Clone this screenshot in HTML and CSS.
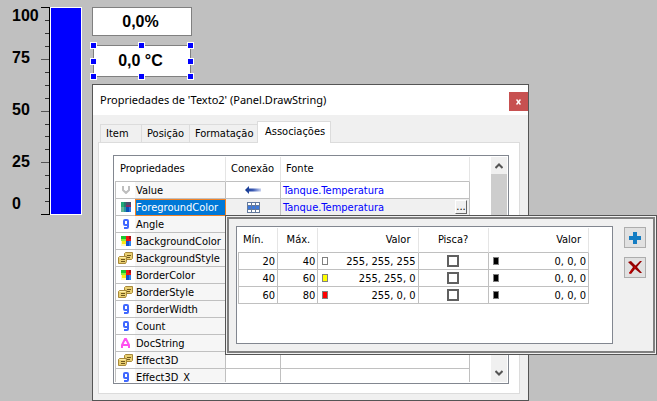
FILE: index.html
```html
<!DOCTYPE html>
<html lang="pt">
<head>
<meta charset="utf-8">
<title>Propriedades</title>
<link rel="stylesheet" href="styles.css">
</head>
<body>
<svg class="defs" aria-hidden="true">
  <symbol id="colors" viewBox="0 0 10 10">
    <path fill="#19c82d" d="M0 0h5v5H0z"/><path fill="#f01414" d="M5 0h5v5H5z"/><path fill="#ffe614" d="M0 5h5v5H0z"/><path fill="#1450d2" d="M5 5h5v5H5z"/>
    <path fill="#8cf03c" d="M0 3h5v2H0z"/><path fill="#fff" opacity=".7" d="M0 8h5v2H0zM0 5h1v5H0z"/><path fill="#a01414" d="M8 0h2v3H8z"/><path fill="#2882f0" d="M8 5h2v5H8z"/>
  </symbol>
  <symbol id="mixed" viewBox="0 0 10 10">
    <path fill="#1eaa78" d="M0 0h5v5H0z"/><path fill="#28786e" d="M3 0h2v5H3z"/><path fill="#46506e" d="M5 0h5v3H5z"/><path fill="#8c2864" d="M5 3h5v2H5z"/><path fill="#64b496" d="M0 5h5v5H0z"/><path fill="#2896a0" d="M3 5h2v5H3z"/><path fill="#0a50b4" d="M5 5h5v5H5z"/><path fill="#2878e6" d="M8 5h2v5H8z"/>
  </symbol>
  <symbol id="nine" viewBox="0 0 8 10">
    <path fill="none" stroke="#4169ff" stroke-width="2" d="M6 6H3Q2 6 2 5V2Q2 1 3 1H5Q6 1 6 2V8Q6 9 5 9H2"/>
  </symbol>
  <symbol id="tags" viewBox="0 0 15 12">
    <path fill="#e8ce70" stroke="#a8893a" d="M6.500 1.500l1-1h7v6l-1 1h-7z"/><path fill="none" stroke="#70581c" d="M9 3.500h4M9 5.500h3"/>
    <path fill="#e8ce70" stroke="#a8893a" d="M.5 5.500l1-1h7v5l-1 2h-7z"/><path fill="none" stroke="#fff0a8" d="M1.500 5.500h6"/><path fill="none" stroke="#70581c" d="M3 7.500h4M3 9.500h4"/>
  </symbol>
  <symbol id="letter" viewBox="0 0 9 10">
    <path fill="none" stroke="#ff50f0" stroke-width="2" d="M1 10V7L4 1H5L8 7V10M2 7H7"/>
  </symbol>
  <symbol id="vee" viewBox="0 0 8 8">
    <path fill="none" stroke="#bebebe" stroke-width="2" d="M1 0V4L4 7L7 4V0"/>
  </symbol>
</svg>
<main class="panel">
  <section class="drawing">
    <div class="gauge">
      <div class="scale"><span>100</span><span>75</span><span>50</span><span>25</span><span>0</span></div>
      <svg class="ticks" width="9" height="208" viewBox="0 0 9 208" shape-rendering="crispEdges">
        <path stroke="#000" d="M8.500 0V208M0 .5H9M0 207.500H9"/>
        <path stroke="#555" stroke-width="1" d="M0 52.500H8M0 104.500H8M0 155.500H8"/>
        <path stroke="#333" d="M4 13.500H8M4 26.500H8M4 39.500H8M4 65.500H8M4 78.500H8M4 91.500H8M4 117.500H8M4 129.500H8M4 142.500H8M4 168.500H8M4 181.500H8M4 194.500H8"/>
      </svg>
      <div class="bar"></div>
    </div>
    <div class="readouts">
      <div class="readout">0,0%</div>
      <div class="readout selected">0,0 °C
        <i class="handle top left"></i><i class="handle top center"></i><i class="handle top right"></i>
        <i class="handle middle left"></i><i class="handle middle right"></i>
        <i class="handle bottom left"></i><i class="handle bottom center"></i><i class="handle bottom right"></i>
      </div>
    </div>
  </section>

  <section class="dialog">
    <header class="titlebar">
      <h1>Propriedades de 'Texto2' (Panel.DrawString)</h1>
      <button class="close" aria-label="Fechar"><svg width="5" height="6" viewBox="0 0 5 6"><path fill="none" stroke="#fff" stroke-width="1.500" d="M.5 .5L4.500 5.500M4.500 .5L.5 5.500"/></svg></button>
    </header>
    <div class="content">
      <nav class="tabs" role="tablist">
        <button class="tab item" role="tab">Item</button>
        <button class="tab position" role="tab">Posição</button>
        <button class="tab format" role="tab">Formatação</button>
        <button class="tab active" role="tab">Associações</button>
      </nav>
      <div class="pane">
        <div class="list">
          <div class="viewport">
            <table class="grid props">
              <colgroup><col class="c-icon"><col class="c-name"><col class="c-link"><col></colgroup>
              <thead><tr><th colspan="2">Propriedades</th><th>Conexão</th><th>Fonte</th></tr></thead>
              <tbody>
                <tr><td><svg width="8" height="8"><use href="#vee"/></svg></td><td>Value</td><td><svg width="16" height="8" viewBox="0 0 16 8"><defs><linearGradient id="fade"><stop offset="0" stop-color="#0a328c"/><stop offset=".5" stop-color="#3c5ab4"/><stop offset="1" stop-color="#c8d2f0"/></linearGradient></defs><path fill="url(#fade)" d="M0 4L4 0V2.500H16V5.500H4V8Z"/></svg></td><td>Tanque.Temperatura</td></tr>
                <tr class="current"><td><svg width="10" height="10"><use href="#mixed"/></svg></td><td>ForegroundColor</td><td><svg width="13" height="11" viewBox="0 0 13 11" shape-rendering="crispEdges"><path fill="#63799c" d="M0 0h13v11H0z"/><path fill="#fff" d="M1 1h3v2H1zM5 1h3v2H5zM9 1h3v2H9zM1 8h3v2H1zM5 8h3v2H5zM9 8h3v2H9z"/><path fill="#3c78dc" d="M1 4h3v3H1zM5 4h3v3H5zM9 4h3v3H9z"/></svg></td><td><div class="source"><span>Tanque.Temperatura</span><button class="browse">...</button></div></td></tr>
                <tr><td><svg width="8" height="10"><use href="#nine"/></svg></td><td>Angle</td><td></td><td></td></tr>
                <tr><td><svg width="10" height="10"><use href="#colors"/></svg></td><td>BackgroundColor</td><td></td><td></td></tr>
                <tr><td><svg width="15" height="12"><use href="#tags"/></svg></td><td>BackgroundStyle</td><td></td><td></td></tr>
                <tr><td><svg width="10" height="10"><use href="#colors"/></svg></td><td>BorderColor</td><td></td><td></td></tr>
                <tr><td><svg width="15" height="12"><use href="#tags"/></svg></td><td>BorderStyle</td><td></td><td></td></tr>
                <tr><td><svg width="8" height="10"><use href="#nine"/></svg></td><td>BorderWidth</td><td></td><td></td></tr>
                <tr><td><svg width="8" height="10"><use href="#nine"/></svg></td><td>Count</td><td></td><td></td></tr>
                <tr><td><svg width="9" height="10"><use href="#letter"/></svg></td><td>DocString</td><td></td><td></td></tr>
                <tr><td><svg width="15" height="12"><use href="#tags"/></svg></td><td>Effect3D</td><td></td><td></td></tr>
                <tr><td><svg width="8" height="10"><use href="#nine"/></svg></td><td>Effect3D_X</td><td></td><td></td></tr>
              </tbody>
            </table>
          </div>
          <div class="scrollbar">
            <svg width="8" height="6" viewBox="0 0 8 6"><path fill="none" stroke="#555" stroke-width="2" d="M.5 5L4 1.500L7.500 5"/></svg>
            <div class="thumb"></div>
            <svg width="8" height="6" viewBox="0 0 8 6"><path fill="none" stroke="#555" stroke-width="2" d="M.5 1L4 4.500L7.500 1"/></svg>
          </div>
        </div>
      </div>
    </div>
  </section>

  <section class="popup">
    <div class="popup-body">
      <div class="ranges">
        <table class="grid colors">
          <colgroup><col class="c-num"><col class="c-num"><col class="c-value"><col class="c-blink"><col class="c-value"></colgroup>
          <thead><tr><th class="left-text">Mín.</th><th>Máx.</th><th>Valor</th><th>Pisca?</th><th>Valor</th></tr></thead>
          <tbody>
            <tr><td>20</td><td>40</td><td><div class="value"><i class="swatch white"></i>255, 255, 255</div></td><td><input type="checkbox" aria-label="Pisca 20 a 40"></td><td><div class="value"><i class="swatch black"></i>0, 0, 0</div></td></tr>
            <tr><td>40</td><td>60</td><td><div class="value"><i class="swatch yellow"></i>255, 255, 0</div></td><td><input type="checkbox" aria-label="Pisca 40 a 60"></td><td><div class="value"><i class="swatch black"></i>0, 0, 0</div></td></tr>
            <tr><td>60</td><td>80</td><td><div class="value"><i class="swatch red"></i>255, 0, 0</div></td><td><input type="checkbox" aria-label="Pisca 60 a 80"></td><td><div class="value"><i class="swatch black"></i>0, 0, 0</div></td></tr>
          </tbody>
        </table>
      </div>
      <div class="actions">
        <button aria-label="Adicionar"><svg width="12" height="12" viewBox="0 0 12 12"><path fill="#147dc3" d="M4 0h4v4h4v4H8v4H4V8H0V4h4z"/></svg></button>
        <button aria-label="Remover"><svg width="14" height="13" viewBox="0 0 14 13"><path fill="#960000" d="M0 1L3 0L7.500 4.500L12 0L14 0L9 6L14 12L12 12L7 8L3 13L1 12L5 6Z"/><path fill="#c80000" d="M5 8L2 13L1 12L4 8ZM6 5L8 7L6 8Z"/></svg></button>
      </div>
    </div>
  </section>
</main>
</body>
</html>
```
FILE: styles.css
```css
* { box-sizing: border-box; }

body {
  margin: 0;
  background: #c0c0c0;
  color: #000;
  font: 11px/16px "DejaVu Sans Condensed", "Noto Sans", sans-serif;
}

button { font: inherit; color: inherit; padding: 0; margin: 0; border-radius: 0; }
svg { display: block; }
.defs { position: absolute; width: 0; height: 0; }

.panel { position: relative; min-height: 100vh; overflow: hidden; }

/* Drawing on the canvas */
.drawing {
  display: flex;
  gap: 10px;
  padding: 7px 0 0 12px;
  font: bold 16px/18px "Liberation Sans", Arial, sans-serif;
}
.gauge { display: flex; height: 208px; }
.scale { display: flex; flex-direction: column; gap: 24px; width: 29px; }
.scale span:nth-child(3) { margin: 10px 0; }
.bar { width: 32px; background: #00f; border: 1px solid #fff; }
.readouts { display: flex; flex-direction: column; gap: 9px; width: 100px; }
.readout {
  display: flex;
  align-items: center;
  justify-content: center;
  height: 29px;
  padding-right: 3px;
  background: #fff;
  border: 1px solid #808080;
}
.selected { position: relative; height: 32px; margin: 0 1px; }
.handle { position: absolute; width: 7px; height: 7px; background: #00f; border: 1px solid #fff; }
.top { top: -4px; }
.middle { top: 12px; }
.bottom { bottom: -4px; }
.left { left: -4px; }
.center { left: 44px; }
.right { right: -4px; }

/* Properties window */
.dialog {
  position: absolute;
  inset: 84px 128px 0 92px;
  display: flex;
  flex-direction: column;
  background: #f0f0f0;
  border: 1px solid #555;
}
.titlebar { display: flex; justify-content: space-between; align-items: flex-start; height: 30px; background: #fff; }
h1 { margin: 7px 0 0 7px; font: 11px/16px "Noto Sans", sans-serif; }
.close {
  display: grid;
  place-items: center;
  width: 19px;
  height: 19px;
  margin-top: 7px;
  background: #c75050;
  border: 0;
}
.content { flex: 1; display: flex; flex-direction: column; min-height: 0; padding: 6px 8px 6px 5px; }
.tabs { display: flex; align-items: flex-end; padding-left: 2px; }
.tab {
  height: 18px;
  padding: 0 5px;
  text-align: left;
  background: #f0f0f0;
  border: 1px solid #dcdcdc;
  border-width: 1px 0 0 1px;
}
.item { width: 41px; }
.position { width: 48px; }
.format { width: 68px; }
.active { position: relative; height: 22px; width: 74px; margin-bottom: -1px; padding-bottom: 2px; background: #fff; border-right-width: 1px; padding-left: 7px; }
.pane { flex: 1; min-height: 0; padding: 12px 10px 9px 14px; background: #fff; border: 1px solid #dcdcdc; display: flex; }
.list { flex: 1; display: flex; justify-content: space-between; background: #fff; border: 1px solid #828790; padding: 1px; }
.viewport { flex: 1; overflow: hidden; padding-right: 21px; }
.scrollbar { display: flex; flex-direction: column; align-items: center; width: 16px; padding: 6px 0; background: #f0f0f0; }
.thumb { width: 16px; height: 66px; margin-top: 5px; margin-bottom: auto; background: #cdcdcd; }

/* Tables */
.grid { border-collapse: separate; border-spacing: 0; table-layout: fixed; }
.grid th { height: 25px; padding: 0 5px; font-weight: normal; text-align: left; border-right: 1px solid #e5e5e5; border-bottom: 1px solid #c0c0c0; }
.grid td { height: 17px; padding: 0 2px; line-height: 15px; border-right: 1px solid #c0c0c0; border-bottom: 1px solid #c0c0c0; white-space: nowrap; }
.grid td:first-child { border-left: 1px solid #c0c0c0; }
.props { width: 100%; }
.c-icon { width: 20px; }
.c-name { width: 91px; }
.c-link { width: 55px; }
.props td:first-child { padding: 0; border-right: 0; }
.props td svg { margin: 0 auto; }
.props td:nth-child(2) { padding-left: 1px; background: #f6f6f6; background-clip: padding-box; }
.props td:nth-child(4) { color: #00f; }
.current td:nth-child(n+3) { background: #f0f0f0; background-clip: padding-box; }
.props .current td:nth-child(2) { background: #0078d7; color: #fff; outline: 1px solid #f08228; outline-offset: -1px; }
.source { display: flex; justify-content: space-between; }
.browse { width: 12px; height: 14px; line-height: 8px; background: #f0f0f0; border: 1px solid; border-color: #fff #666 #666 #fff; color: #000; }

/* Colour range editor */
.popup { position: absolute; inset: 215px 0 auto 225px; padding: 1px; background: #f0f0f0; border: 1px solid #555; }
.popup-body { display: flex; gap: 11px; padding: 7px; border: 2px solid #808080; }
.ranges { flex: 1; height: 118px; padding: 1px; background: #fff; border: 1px solid #828790; }
.c-num { width: 40px; }
.c-value { width: 100px; }
.c-blink { width: 70px; }
.colors { width: 351px; }
.colors th { padding: 0 7px; text-align: right; }
.colors th.left-text { text-align: left; padding-left: 5px; }
.colors td { text-align: right; }
.colors th:nth-child(4) { text-align: center; }
.value { display: flex; justify-content: space-between; align-items: center; padding-left: 2px; }
.swatch { width: 6px; height: 8px; border: 1px solid #808080; }
.white { background: #fff; }
.yellow { background: #ff0; }
.red { background: #f00; }
.black { background: #000; }
.colors input { display: block; appearance: none; width: 12px; height: 12px; margin: 0 auto; background: #fff; border: 2px solid #606060; }
.actions { display: flex; flex-direction: column; gap: 9px; padding: 1px 0; }
.actions button { display: grid; place-items: center; width: 22px; height: 21px; background: #e1e1e1; border: 1px solid #adadad; }
```
